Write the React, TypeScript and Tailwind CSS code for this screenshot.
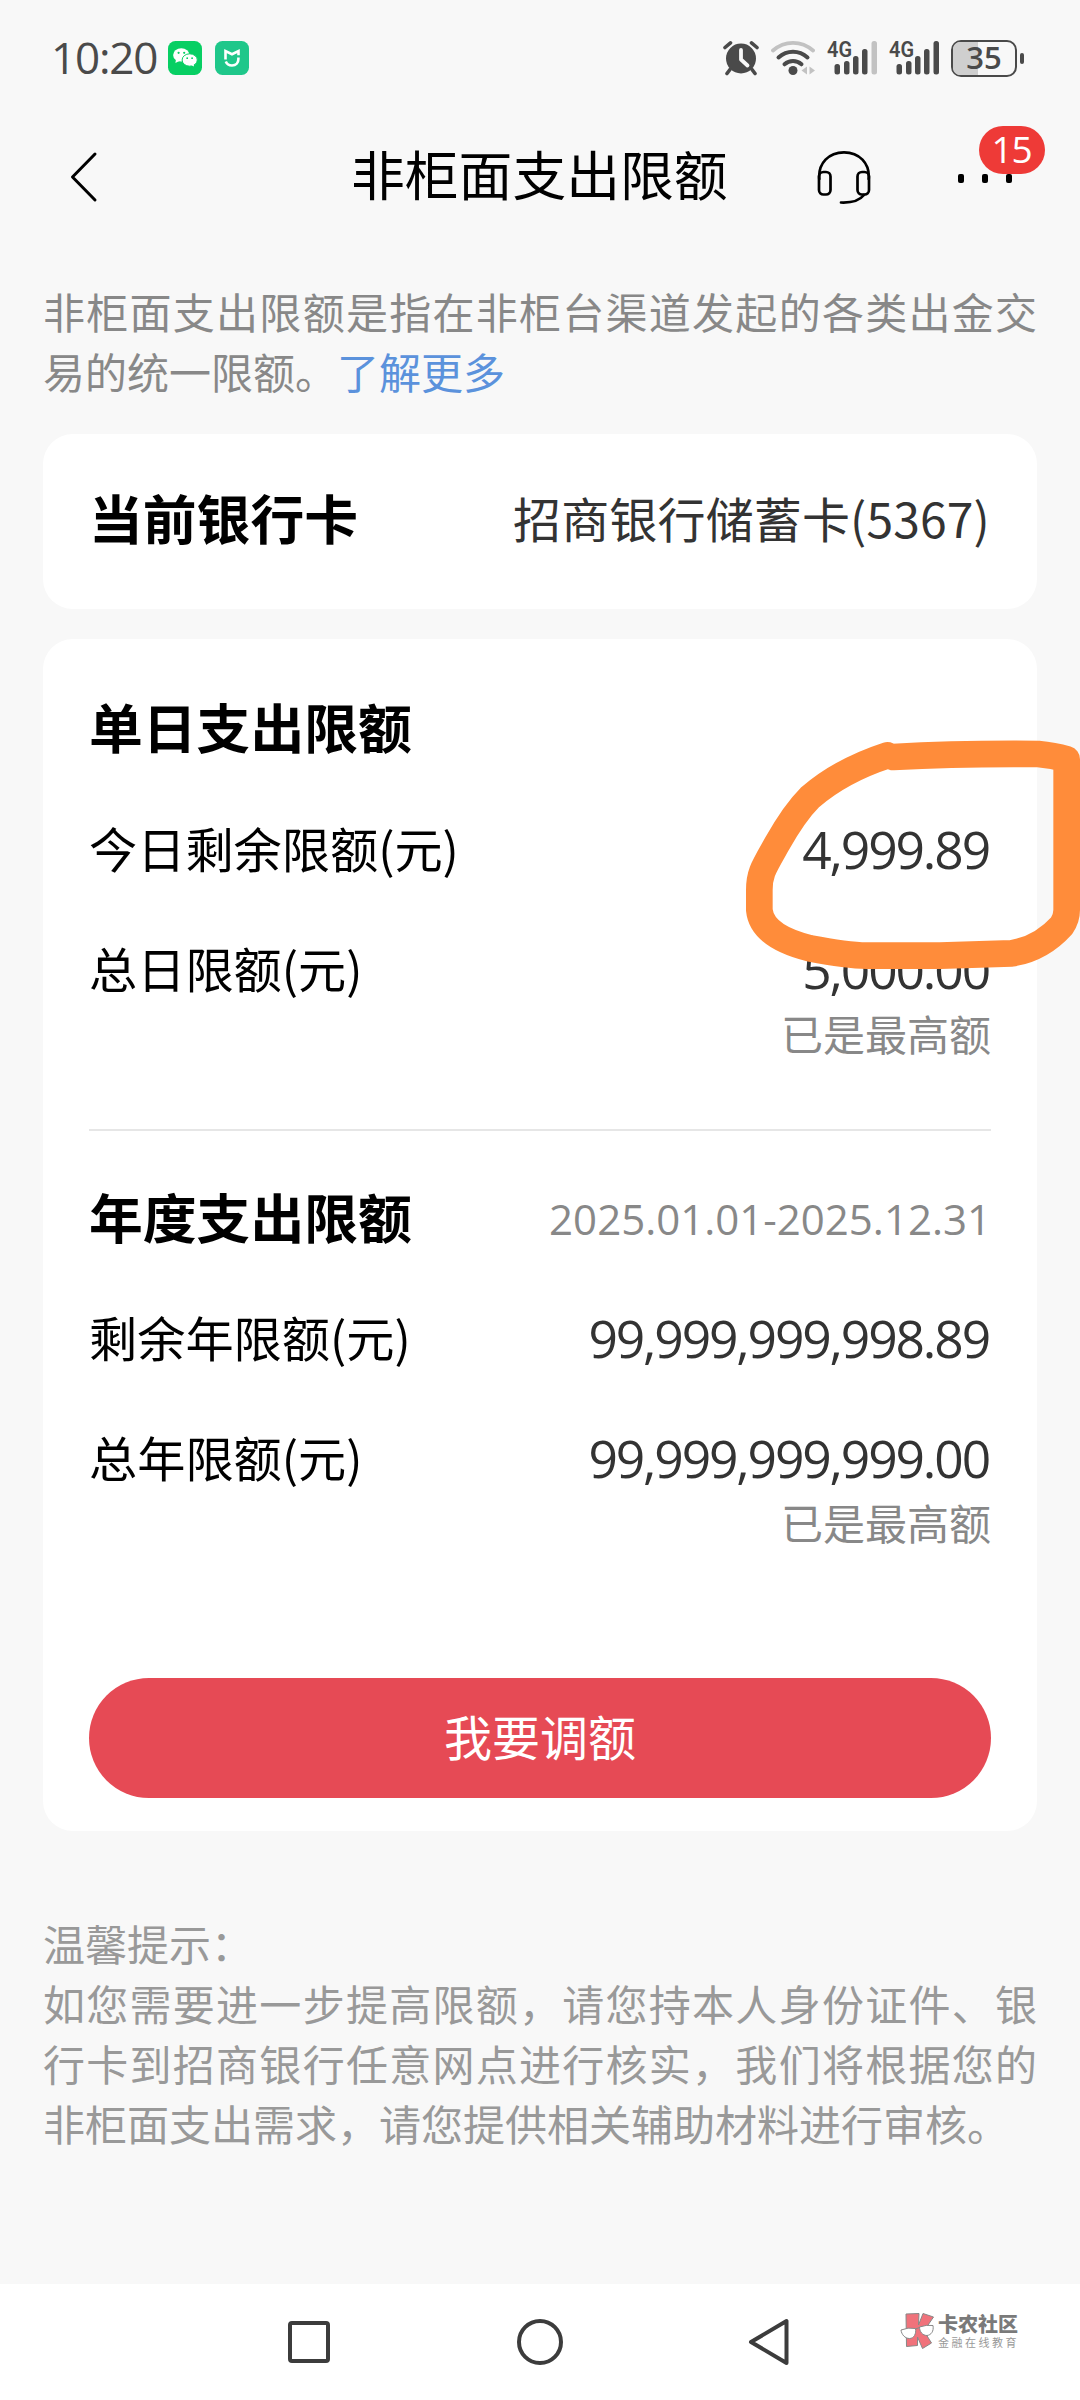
import type { ReactNode } from 'react';

function StatusBar() {
  return (
    <div className="flex h-[116px] items-center pl-[51px] pr-[56px] text-[#4a4a4a]">
      <span className="-mt-[2px] font-['Open_Sans',sans-serif] text-[44px] font-medium leading-[60px] tracking-[-1.200px]">10:20</span>

      {/* WeChat */}
      <svg className="ml-[11px]" width="34" height="34" viewBox="0 0 34 34">
        <rect width="34" height="34" rx="7.5" fill="#07cf63" />
        <ellipse cx="13.300" cy="13.900" rx="8.200" ry="6.700" fill="#fff" />
        <path d="M8 18l-.6 4 4-2z" fill="#fff" />
        <ellipse cx="21.700" cy="19" rx="7.600" ry="6.200" fill="#fff" stroke="#07cf63" strokeWidth="1" />
        <path d="M23 24l3 1.600-.5-3z" fill="#fff" />
        <circle cx="10.600" cy="11.800" r="1.100" fill="#07cf63" />
        <circle cx="16.200" cy="11.800" r="1.100" fill="#07cf63" />
        <circle cx="19.200" cy="17.200" r="0.900" fill="#07cf63" />
        <circle cx="24.100" cy="17.200" r="0.900" fill="#07cf63" />
      </svg>

      {/* Mi Home */}
      <svg className="ml-[13px]" width="34" height="34" viewBox="0 0 34 34">
        <rect width="34" height="34" rx="7.5" fill="#1fc78a" />
        <path d="M10.500 18.500V10l6.500 3.200L23.500 10v4.200" fill="none" stroke="#fff" strokeWidth="2.600" />
        <path d="M10.800 20.500c1 2.500 3.200 4 6.200 4 4 0 6.400-2.600 6.400-6.500v-1.500" fill="none" stroke="#fff" strokeWidth="2.600" />
      </svg>

      <div className="ml-auto flex items-center">
        {/* Alarm */}
        <svg width="36" height="36" viewBox="0 0 36 36">
          <circle cx="18" cy="18.500" r="15" fill="currentColor" />
          <path d="M2 7.500L7.500 2.800M34 7.500L28.500 2.800M7 29.500l-3 4M29 29.500l3 4" stroke="currentColor" strokeWidth="3.600" strokeLinecap="round" />
          <path d="M18 10v9.500l6.500 6" fill="none" stroke="#f8f8f8" strokeWidth="3.800" strokeLinecap="round" strokeLinejoin="round" />
        </svg>

        {/* Wifi */}
        <svg className="ml-[12px]" width="44" height="36" viewBox="0 0 44 36">
          <path d="M2 10.500c11.500-10.300 28.500-10.300 40 0" fill="none" stroke="#c2c2c2" strokeWidth="3.800" strokeLinecap="round" />
          <path d="M7.500 17.500c8.500-7.800 20.500-7.800 29 0M13.500 24.300c5-4.300 12-4.300 17 0" fill="none" stroke="currentColor" strokeWidth="4" strokeLinecap="round" />
          <circle cx="22" cy="30.500" r="4.500" fill="currentColor" />
          <path d="M36 26.500v8l-5.500-4zM38.500 26.500v8l5.500-4z" fill="#c2c2c2" />
        </svg>

        <Signal lastBar="#c2c2c2" />
        <Signal lastBar="#4a4a4a" />

        {/* Battery */}
        <div className="ml-[12px] flex items-center">
          <div className="relative h-[37px] w-[66px] rounded-[10px] border-[2.500px] border-[#4a4a4a]">
            <div className="h-full w-[25px] rounded-l-[7px] bg-[#cfcfcf]" />
            <span className="absolute -inset-y-[6px] inset-x-0 text-center font-['Open_Sans',sans-serif] text-[31px] font-semibold leading-[42px]">35</span>
          </div>
          <div className="ml-[3px] h-[11px] w-[4px] rounded-[2px] bg-[#4a4a4a]" />
        </div>
      </div>
    </div>
  );
}

function Signal({ lastBar }: { lastBar: string }) {
  return (
    <svg className="ml-[12px] overflow-visible" width="50" height="36" viewBox="0 0 50 36">
      <text x="0" y="17" fontFamily="Roboto, sans-serif" fontSize="22" fontWeight="600" fill="#4a4a4a" textLength="25" lengthAdjust="spacingAndGlyphs">4G</text>
      <rect x="7.500" y="24" width="5.500" height="10.500" rx="2.500" fill="#4a4a4a" />
      <rect x="17" y="21" width="5.500" height="13.500" rx="2.500" fill="#4a4a4a" />
      <rect x="26" y="16" width="5.500" height="18.500" rx="2.500" fill="#4a4a4a" />
      <rect x="35" y="9" width="5.500" height="25.500" rx="2.500" fill="#4a4a4a" />
      <rect x="44.500" y="1" width="5.500" height="33.500" rx="2.500" fill={lastBar} />
    </svg>
  );
}

function Header() {
  return (
    <header className="flex h-[121px] items-center text-black">
      <svg className="ml-[70px]" width="28" height="52" viewBox="0 0 28 52">
        <path d="M25 3L2.500 26 25 49" fill="none" stroke="currentColor" strokeWidth="3" strokeLinecap="round" strokeLinejoin="round" />
      </svg>
      <h1 className="-mt-[8px] ml-[253px] text-[53.800px] leading-none">非柜面支出限额</h1>
      {/* Support */}
      <svg className="ml-[89px]" width="54" height="54" viewBox="0 0 54 54" fill="none" stroke="currentColor" strokeWidth="2.700" strokeLinecap="round">
        <path d="M2.300 29C1 13 12 2.300 27 2.300S53 13 51.700 29" />
        <rect x="2" y="22" width="11.500" height="22.500" rx="4.500" />
        <rect x="40.500" y="22" width="11.500" height="22.500" rx="4.500" />
        <path d="M47 45c-4 5-11 8-23 7.500" />
      </svg>
      <div className="relative mt-[4px] ml-[87px] flex gap-[18px]">
        <i className="h-[9px] w-[6px] rounded-[2px] bg-black" />
        <i className="h-[9px] w-[6px] rounded-[2px] bg-black" />
        <i className="h-[9px] w-[6px] rounded-[2px] bg-black" />
        <span className="absolute -top-[48px] left-[21px] h-[48px] w-[66px] rounded-full bg-[#ee3a37] text-center font-['Open_Sans',sans-serif] text-[37px] leading-[46px] tracking-[-1px] text-white">
          15
        </span>
      </div>
    </header>
  );
}

function Amount({ children }: { children: ReactNode }) {
  return <span className="mr-[2px] font-['Open_Sans',sans-serif] text-[51.500px] leading-[60px] tracking-[-2.100px] text-[#333]">{children}</span>;
}

function Row({ label, value }: { label: string; value: string }) {
  return (
    <div className="flex h-[60px] items-center justify-between">
      <span className="-mt-[5px] text-[48.200px] leading-[60px] text-black">{label}</span>
      <Amount>{value}</Amount>
    </div>
  );
}

function MaxedOut() {
  return <p className="mt-[4px] text-right text-[42px] leading-[60px] text-[#888]">已是最高额</p>;
}

/* Hand-drawn marker around the remaining amount */
function Marker() {
  return (
    <svg className="pointer-events-none absolute left-[700px] top-[700px]" width="380" height="380" viewBox="0 0 1140 1140">
      <path
        d="M562 166C470 196 395 236 330 292C290 332 260 380 232 430C190 504 178 520 178 570V630C184 690 250 725 330 745C400 758 450 766 500 767H720L935 760C1010 748 1055 710 1085 677Q1100 655 1100 630V178Q1060 166 1015 162C900 161 740 162 580 171"
        fill="none"
        stroke="#ff8c3a"
        strokeWidth="80"
        strokeLinecap="round"
        strokeLinejoin="round"
      />
    </svg>
  );
}

function Watermark() {
  return (
    <div className="absolute right-[61px] top-[28px] flex items-center gap-[3px]">
      <svg width="35" height="38" viewBox="0 0 35 38">
        <path d="M6 2L19 1.500L18.500 13L23 1.500L33.500 5L24 19L31.500 31L22.500 36.500L17.500 25V33.500L6.500 34.500Z" fill="#f0727b" stroke="#888" strokeWidth="1" />
        <path d="M1 18q7-3 14.500-1.500c1 5-1.500 10-6 10s-8-4-8.500-8.500zM19.500 15q7-2.500 13.500-1.500c1 6-2 9.500-6 10-4.500 0-7.500-4-7.500-8.500z" fill="#fff" stroke="#888" strokeWidth="1" />
        <path d="M15.500 17l4-1.500" stroke="#888" strokeWidth="1" />
      </svg>
      <div className="flex flex-col text-[#7a7a7a]">
        <span className="text-[20px] font-black leading-[22px]">卡农社区</span>
        <span className="text-[11px] leading-[14px] tracking-[2.500px] text-[#999]">金融在线教育</span>
      </div>
    </div>
  );
}

export default function App() {
  return (
    <div className="relative flex h-[2400px] w-[1080px] flex-col overflow-hidden bg-[#f8f8f8] font-['Noto_Sans_CJK_SC',sans-serif]">
      <StatusBar />
      <Header />

      <main className="flex-1 px-[43px]">
        <p className="pt-[44px] text-justify text-[42px] leading-[60px] text-[#888]">
          非柜面支出限额是指在非柜台渠道发起的各类出金交易的统一限额。<a className="text-[#5b92dc]">了解更多</a>
        </p>

        <section className="mt-[33px] flex h-[175px] items-center justify-between rounded-[30px] bg-white px-[47px] pb-[10px]">
          <h2 className="-ml-[1px] text-[53.800px] font-bold leading-none text-black">当前银行卡</h2>
          <span className="text-[48px] leading-none tracking-[0.150px] text-[#333]">招商银行储蓄卡(5367)</span>
        </section>

        <section className="mt-[30px] h-[1192px] rounded-[30px] bg-white px-[46px] pt-[57px]">
          <h2 className="text-[53.800px] font-bold leading-[60px] text-black">单日支出限额</h2>
          <div className="mt-[63px] flex flex-col gap-[60px]">
            <Row label="今日剩余限额(元)" value="4,999.89" />
            <Row label="总日限额(元)" value="5,000.00" />
          </div>
          <MaxedOut />

          <div className="mt-[66px] h-[2px] bg-[#e6e6e6]" />

          <div className="mt-[56px] flex h-[60px] items-center justify-between">
            <h2 className="-mt-[2px] text-[53.800px] font-bold leading-[60px] text-black">年度支出限额</h2>
            <span className="mt-[4px] font-['Open_Sans',sans-serif] text-[42px] leading-[60px] text-[#888]">2025.01.01-2025.12.31</span>
          </div>
          <div className="mt-[61px] flex flex-col gap-[60px]">
            <Row label="剩余年限额(元)" value="99,999,999,998.89" />
            <Row label="总年限额(元)" value="99,999,999,999.00" />
          </div>
          <MaxedOut />

          <button className="mt-[126px] h-[120px] w-full rounded-full bg-[#e64a55] pb-[7px] text-[48px] leading-none text-white">我要调额</button>
        </section>

        <div className="mt-[82px] text-justify text-[42px] leading-[60px] text-[#999]">
          <p>温馨提示：</p>
          <p>如您需要进一步提高限额，请您持本人身份证件、银行卡到招商银行任意网点进行核实，我们将根据您的非柜面支出需求，请您提供相关辅助材料进行审核。</p>
        </div>
      </main>

      <nav className="relative flex h-[116px] items-center bg-white text-[#3c3c3c]">
        <svg className="ml-[286px]" width="46" height="46" viewBox="0 0 46 46">
          <rect x="4" y="4" width="38" height="38" rx="2" fill="none" stroke="currentColor" strokeWidth="4" />
        </svg>
        <svg className="ml-[185px]" width="46" height="46" viewBox="0 0 46 46">
          <circle cx="23" cy="23" r="21" fill="none" stroke="currentColor" strokeWidth="4" />
        </svg>
        <svg className="ml-[185px]" width="42" height="48" viewBox="0 0 42 48">
          <path d="M38.500 3V45L3 24z" fill="none" stroke="currentColor" strokeWidth="4" strokeLinejoin="round" />
        </svg>
        <Watermark />
      </nav>

      <Marker />
    </div>
  );
}
